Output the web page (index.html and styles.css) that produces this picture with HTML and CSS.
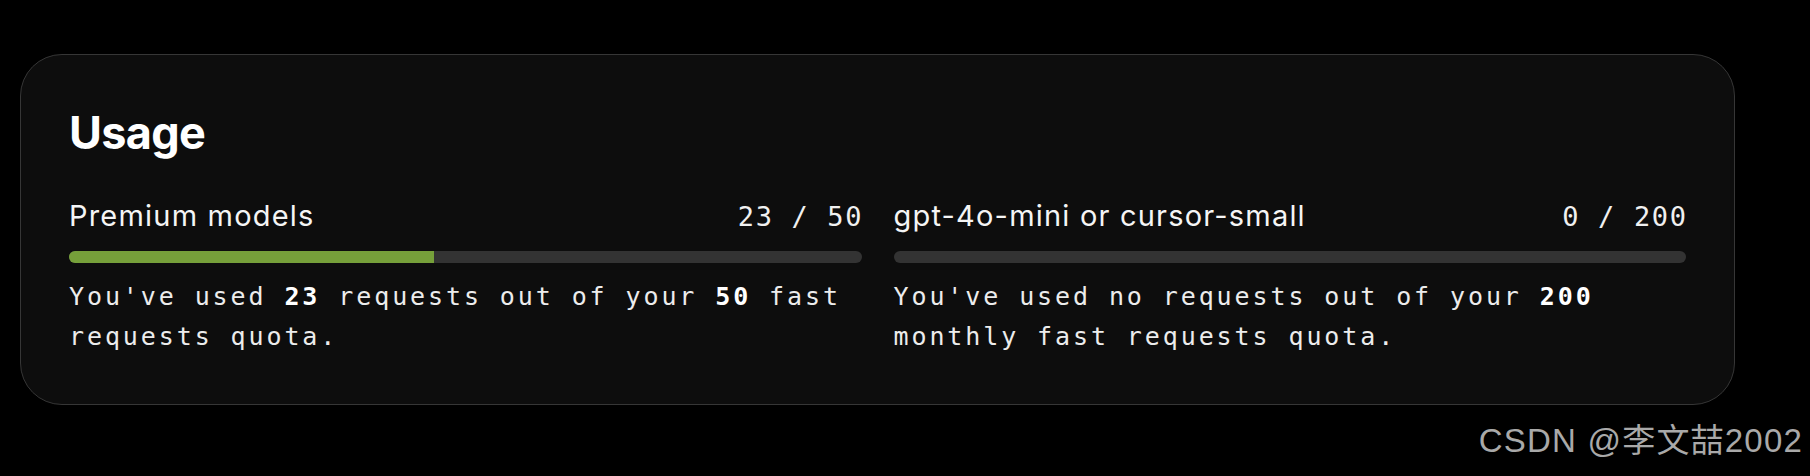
FILE: index.html
```html
<!DOCTYPE html>
<html lang="en">
<head>
<meta charset="utf-8">
<title>Usage</title>
<link rel="stylesheet" href="styles.css">
</head>
<body>
<section class="card">
  <h2 class="title">Usage</h2>
  <div class="cols">
    <div class="col">
      <div class="head">
        <span class="name">Premium models</span>
        <span class="count">23 / 50</span>
      </div>
      <div class="bar"><div class="fill" style="width:46%"></div></div>
      <p class="desc">You've used <b>23</b> requests out of your <b>50</b> fast requests quota.</p>
    </div>
    <div class="col">
      <div class="head">
        <span class="name">gpt-4o-mini or cursor-small</span>
        <span class="count">0 / 200</span>
      </div>
      <div class="bar"><div class="fill" style="width:0%"></div></div>
      <p class="desc">You've used no requests out of your <b>200</b> monthly fast requests quota.</p>
    </div>
  </div>
</section>
<div class="watermark">CSDN @李文喆2002</div>
</body>
</html>
```
FILE: styles.css
```css
html, body {
  margin: 0;
  padding: 0;
  background: #000;
}
body {
  width: 1810px;
  height: 476px;
  position: relative;
  overflow: hidden;
  font-family: Inter, "Noto Sans", sans-serif;
  color: #fafafa;
}
.card {
  box-sizing: border-box;
  width: 1715px;
  height: 351px;
  margin: 54px 0 0 20px;
  padding: 50px 48px 48px 48px;
  background: #0d0d0d;
  border: 1px solid #363636;
  border-radius: 42px;
}
.title {
  margin: 0;
  font-size: 45px;
  line-height: 56px;
  font-weight: 700;
  letter-spacing: -0.015em;
  color: #fff;
}
.cols {
  display: grid;
  grid-template-columns: 1fr 1fr;
  column-gap: 32px;
  margin-top: 37px;
}
.col {
  display: flex;
  flex-direction: column;
}
.head {
  display: flex;
  justify-content: space-between;
  align-items: baseline;
  height: 36px;
}
.name {
  font-size: 29px;
  line-height: 36px;
  font-weight: 400;
  letter-spacing: 1.2px;
  color: #f5f5f5;
}
.count {
  font-family: "DejaVu Sans Mono", "Liberation Mono", monospace;
  font-size: 27px;
  line-height: 36px;
  letter-spacing: 1.65px;
  margin-right: -1.65px;
  color: #f0f0f0;
}
.bar {
  margin-top: 17px;
  height: 12px;
  border-radius: 6px;
  background: #333333;
  overflow: hidden;
}
.fill {
  height: 100%;
  background: #76a03a;
}
.desc {
  margin: 14px 0 0 0;
  font-family: "DejaVu Sans Mono", "Liberation Mono", monospace;
  font-size: 25px;
  line-height: 40px;
  letter-spacing: 2.9px;
  color: #ececec;
}
.desc b {
  font-weight: 700;
  color: #fff;
}
.watermark {
  position: absolute;
  right: 7px;
  top: 421px;
  font-family: "Liberation Sans", "Noto Sans CJK SC", sans-serif;
  font-size: 33px;
  line-height: 40px;
  letter-spacing: 1.2px;
  color: #a9a9a9;
}
```
